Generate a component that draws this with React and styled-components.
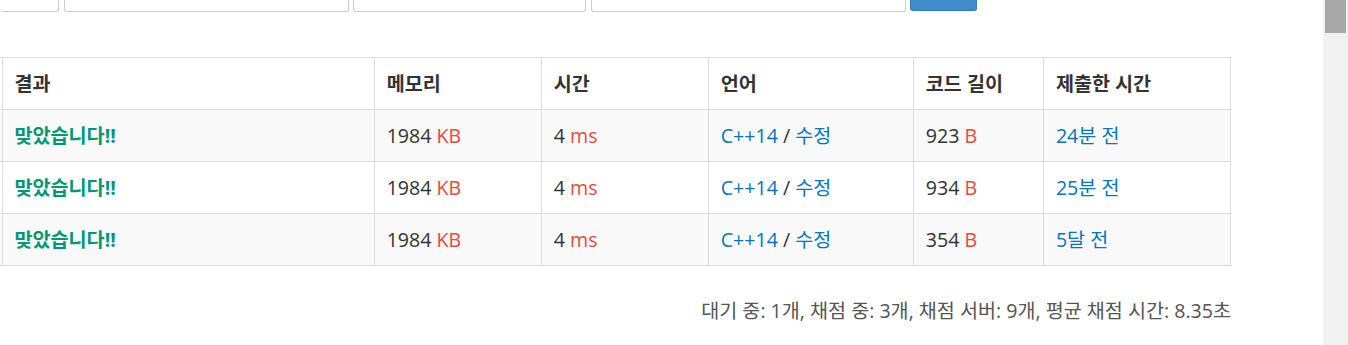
import React from "react";
import styled, { createGlobalStyle } from "styled-components";

const Global = createGlobalStyle`
  html, body { margin: 0; padding: 0; background: #fff; }
  body {
    font-family: "Open Sans", "Noto Sans CJK KR", sans-serif;
    font-size: 19.6px;
    line-height: 28px;
    color: #333;
    overflow: hidden;
  }
`;

const Screen = styled.div`
  display: flex;
  width: 1348px;
  height: 345px;
  overflow: hidden;
`;

const Main = styled.div`
  flex: 1;
  min-width: 0;
  display: flex;
  flex-direction: column;
`;

const FormRow = styled.div`
  display: flex;
  gap: 4px;
  height: 12px;
`;

const Field = styled.div`
  box-sizing: border-box;
  width: ${(p) => p.$w}px;
  height: 12px;
  border: 1px solid #ccc;
  border-top: none;
  border-left: ${(p) => (p.$cut ? "none" : "1px solid #ccc")};
  border-radius: 0 0 3px 3px;
  background: #fff;
  margin-left: ${(p) => p.$ml || 0}px;
`;

const SearchButton = styled.div`
  box-sizing: border-box;
  width: 67px;
  height: 11px;
  background: #428bca;
  border: 1px solid #357ebd;
  border-top: none;
  border-radius: 0 0 3px 3px;
`;

const Table = styled.table`
  margin-top: 45px;
  border-collapse: collapse;
  table-layout: fixed;
  width: 1231px;
`;

const Th = styled.th`
  border: 1px solid #ddd;
  padding: 12px 11px 11px 12px;
  text-align: left;
  font-weight: 700;
  line-height: 28px;
  white-space: nowrap;
`;

const Tr = styled.tr`
  background: ${(p) => (p.$striped ? "#f9f9f9" : "#fff")};
`;

const Td = styled.td`
  border: 1px solid #ddd;
  padding: 12px 11px 11px 12px;
  line-height: 28px;
  white-space: nowrap;
`;

/* the sliver of a column scrolled off to the left */
const EdgeCell = styled.td`
  border: 1px solid #ddd;
  border-left: none;
  padding: 0;
`;

const Result = styled.span`
  color: #009874;
  font-weight: 700;
`;

const Unit = styled.span`
  color: #e74c3c;
`;

const Link = styled.a`
  color: #0076c0;
  text-decoration: none;
`;

const Footer = styled.p`
  width: 1231px;
  margin: 31px 0 0;
  text-align: right;
  color: #555;
  line-height: 28px;
`;

const Scrollbar = styled.div`
  width: 25px;
  flex: none;
  background: #f1f1f1;
  padding: 0 2px;
  box-sizing: border-box;
`;

const Thumb = styled.div`
  height: 33px;
  background: #a8a8a8;
`;

const cols = [2, 372, 167, 167, 205, 130, 187];
const heads = ["결과", "메모리", "시간", "언어", "코드 길이", "제출한 시간"];
const rows = [
  { len: 923, ago: "24분 전" },
  { len: 934, ago: "25분 전" },
  { len: 354, ago: "5달 전" },
];

export default function App() {
  return (
    <>
      <Global />
      <Screen>
        <Main>
          <FormRow>
            <Field $w={59} $cut />
            <Field $w={285} $ml={1} />
            <Field $w={233} />
            <Field $w={315} $ml={1} />
            <SearchButton />
          </FormRow>
          <Table>
            <colgroup>
              {cols.map((w, i) => (
                <col key={i} style={{ width: w }} />
              ))}
            </colgroup>
            <thead>
              <tr>
                <EdgeCell as="th" />
                {heads.map((h) => (
                  <Th key={h}>{h}</Th>
                ))}
              </tr>
            </thead>
            <tbody>
              {rows.map((r, i) => (
                <Tr key={i} $striped={i % 2 === 0}>
                  <EdgeCell />
                  <Td>
                    <Result>맞았습니다!!</Result>
                  </Td>
                  <Td>
                    1984 <Unit>KB</Unit>
                  </Td>
                  <Td>
                    4 <Unit>ms</Unit>
                  </Td>
                  <Td>
                    <Link href="#">C++14</Link> / <Link href="#">수정</Link>
                  </Td>
                  <Td>
                    {r.len} <Unit>B</Unit>
                  </Td>
                  <Td>
                    <Link href="#">{r.ago}</Link>
                  </Td>
                </Tr>
              ))}
            </tbody>
          </Table>
          <Footer>대기 중: 1개, 채점 중: 3개, 채점 서버: 9개, 평균 채점 시간: 8.35초</Footer>
        </Main>
        <Scrollbar>
          <Thumb />
        </Scrollbar>
      </Screen>
    </>
  );
}
